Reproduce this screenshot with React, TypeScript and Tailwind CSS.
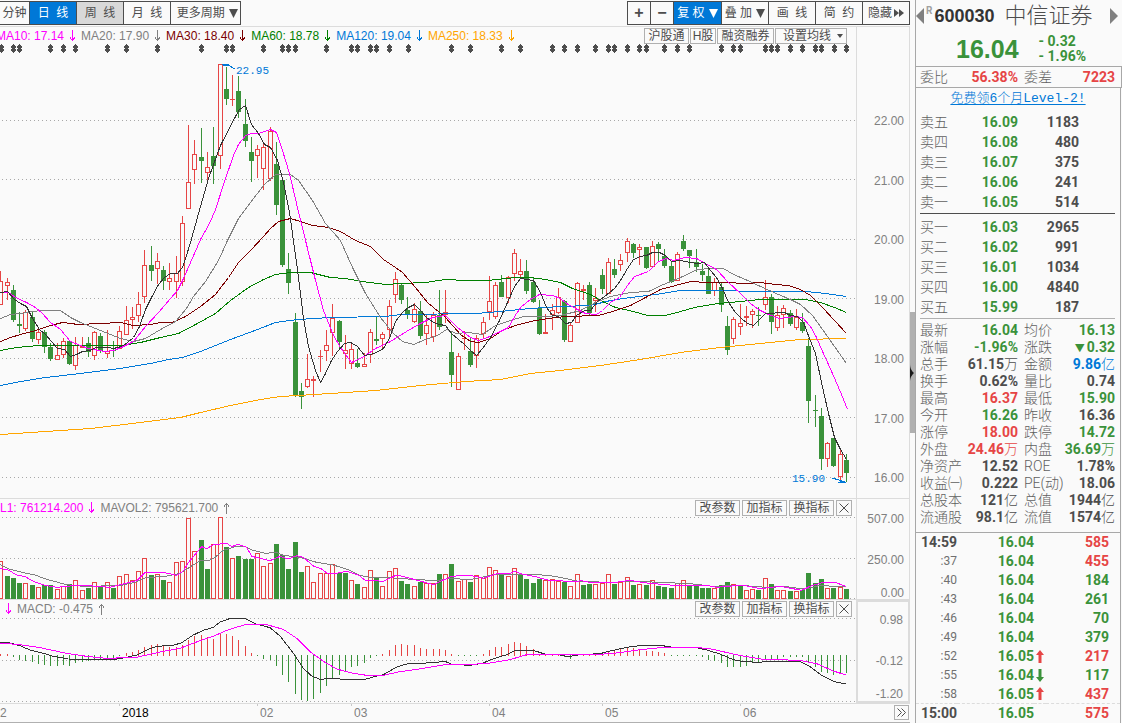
import React from 'react';
import clsx from 'clsx';

const RED = '#e64545';
const GREEN = '#3a923a';

// one entry per trading day: colour, high, body top, body bottom, low
const CANDLES = `r 271 281 305 305|r 278 282 286 300|g 285 290 320 322|g 312 324 326 333|r 310 312 329 331|g 312 317 339 342
r 328 332 340 344|g 330 332 347 353|g 343 347 359 361|r 343 355 360 360|r 338 341 355 358|g 341 341 364 365
r 337 345 366 370|r 337 346 348 348|g 337 343 352 357|r 331 332 356 360|g 333 336 351 353|r 330 351 354 358
g 341 350 351 357|r 326 331 349 349|r 306 320 335 335|r 307 317 320 329|r 292 304 316 322|r 250 265 297 303
g 246 265 271 281|r 253 261 269 284|g 266 270 281 290|r 263 278 282 290|r 256 273 282 298|r 216 223 282 286
r 125 182 209 209|r 140 154 170 184|g 128 157 161 183|r 152 167 173 182|g 127 156 166 184|r 64 64 156 169
g 67 89 99 105|r 75 99 100 106|g 76 91 112 118|g 99 124 141 147|g 137 152 161 182|r 145 149 156 178
r 143 147 169 190|r 127 131 179 181|g 142 164 205 215|g 177 180 265 267|g 253 269 283 294|g 313 322 395 397
g 383 391 397 409|r 354 379 387 388|r 376 379 381 397|r 350 356 357 372|r 330 345 351 361|r 304 318 333 356
g 320 321 342 348|r 335 350 354 369|r 343 349 364 369|g 349 363 367 368|r 353 364 367 367|r 329 332 355 363
g 317 339 341 345|r 332 334 339 349|r 300 306 330 337|r 272 279 295 303|g 283 285 300 304|g 297 310 315 319
r 303 309 322 323|g 301 311 336 339|r 315 325 334 345|r 312 315 337 342|g 290 315 327 330|r 290 312 315 323
g 332 352 375 387|r 353 356 390 390|r 331 338 339 350|g 338 351 365 367|r 335 338 356 368|r 317 322 334 339
r 276 301 312 320|r 282 285 317 319|g 275 282 297 297|r 276 277 298 303|r 249 253 274 281|r 259 271 275 278
g 260 271 291 294|g 278 282 302 303|g 300 308 334 335|r 314 332 334 334|r 304 310 315 330|r 288 297 313 314
g 300 301 340 342|r 322 325 342 342|r 282 283 323 323|r 285 289 291 300|g 282 285 313 315|r 288 298 301 312
g 269 275 289 294|r 258 262 294 294|g 259 269 275 278|r 254 260 265 271|r 238 241 253 262|g 243 244 253 258
r 244 247 250 265|g 247 247 268 269|r 241 246 267 267|g 242 244 249 261|g 249 256 266 268|g 262 266 282 283
r 252 254 281 281|g 235 241 249 251|g 250 250 256 268|g 249 262 267 272|g 264 271 275 281|g 269 276 294 294
r 278 282 291 296|g 282 287 305 312|g 316 326 350 355|r 317 319 339 344|r 304 323 327 335|r 306 316 318 326
r 309 311 315 328|g 307 315 316 326|r 280 297 305 310|g 294 297 322 334|r 306 315 328 331|r 305 308 315 328
g 310 313 324 326|r 309 317 328 330|g 313 322 331 333|g 338 346 401 423|g 395 410 411 427|g 408 416 459 470
r 442 443 459 467|g 438 438 466 467|r 450 454 477 480|g 454 460 473 482`
  .split(/[|\n]/)
  .map((row) => {
    const [color, ...v] = row.split(' ');
    const [high, top, bottom, low] = v.map(Number);
    return { color, high, top, bottom, low };
  });

const VOLUMES = `r214 g258 g264 g279 r280 g285 r291 g287 g287 r297 r290 g283 r271 r301 g294 r277 g290 r277 g294 r260 r253 r271 r244 r205
g255 r253 g270 r277 r217 r214 r85 r184 g150 g237 r163 r82 g171 r205 g198 g207 g207 r190 r229 r220 g162 g195 g237 g156 g246
r229 r277 r249 r249 r223 g250 g250 r271 g282 r292 r241 g264 r289 r244 r235 g273 g282 r289 g276 r280 r281 g252 r253 g222
r274 r269 g276 r256 r265 r232 r241 g250 r258 r235 g253 g267 g279 g267 r271 r268 r274 g276 r289 r253 g285 g282 r283 r280
r253 g282 r277 r262 g285 r283 g285 r271 g288 g291 g294 r280 r271 g285 g285 g294 g294 r295 g285 g276 r283 g287 r301 r298
g300 r265 g283 r301 r301 g303 r304 g300 g249 g279 g267 r295 g294 r292 g297`
  .split(/\s+/)
  .map((s) => ({ color: s[0], top: Number(s.slice(1)) }));

const MACD_ZERO = 495;
const MACD = `492 492 501 510 513 518 522 525 530 530 526 528 521 516 515 510 508 506 504 498 491 488 482 471 465 462 466 472 472 466
450 439 435 442 447 432 432 439 450 470 489 498 507 510 530 557 578 614 632 635 627 611 590 567 555 543 533 528 521 506
498 492 480 465 462 465 465 474 477 477 479 480 493 498 495 498 495 492 480 471 471 464 456 459 468 477 492 492 492 492
503 507 498 492 492 492 490 484 483 478 473 474 479 484 483 487 491 498 498 498 498 500 503 512 514 519 533 533 531 528
521 516 510 512 507 501 503 501 503 521 533 548 551 557 551 551`
  .split(/\s+/)
  .map(Number);

// the first visible day is half cut off by the left edge, hence i - 1
const dayX = (i: number) => 7 + Math.floor((i - 1) * 6.265);
const snap = (v: number) => Math.floor(v / 3) * 3;

const MA_LINES = [
  { stroke: '#ffa500', points: '0,434 45,431 90,428 140,422 180,417 200,412 230,405 260,399 280,396 297,395 330,393 375,390 420,385 465,381 500,379 530,373 560,370 600,365 640,359 680,352 720,347 760,343 800,339 846,338' },
  { stroke: '#0078d7', points: '0,385 15,382 45,377 80,373 120,368 150,363 168,359 182,357 200,351 230,339 257,329 275,322 297,319 330,317 385,316 400,314 475,313 500,311 530,308 560,306 590,305 610,300 630,297 655,294 680,290 725,290 750,291 805,291 825,293 846,296' },
  { stroke: '#008000', points: '0,350 10,348 25,346 40,345 120,345 140,342 160,337 178,333 195,324 215,313 230,300 248,287 263,279 275,274 290,272 310,272 330,277 345,278 362,281 385,284 400,283 425,282 445,279 465,280 487,280 515,277 530,277 545,279 560,282 572,288 590,294 602,301 615,307 633,311 647,315 665,315 680,311 694,307 718,303 740,301 760,299 805,299 820,302 834,307 846,312' },
  { stroke: '#7b0000', points: '0,341 10,337 20,334 35,330 50,325 62,322 78,324 120,322 133,325 150,324 160,322 172,322 185,316 200,306 215,294 228,277 238,262 250,250 263,236 270,228 278,221 290,218 300,221 312,225 328,227 340,231 355,240 370,246 383,259 395,267 402,272 415,287 427,302 445,317 460,334 470,341 478,342 490,338 502,330 515,325 530,321 547,318 565,316 598,315 612,311 630,305 645,297 660,289 675,285 690,281 706,282 725,282 745,283 760,282 775,284 788,285 800,289 810,295 822,307 834,320 846,333' },
  { stroke: '#808080', points: '0,318 10,314 20,313 40,310 60,310 70,317 80,322 90,326 100,330 120,338 133,341 145,338 160,329 175,321 186,308 193,296 205,281 218,260 227,240 238,218 250,202 263,185 275,174 290,174 298,180 312,200 325,223 340,240 352,267 365,293 380,317 393,333 402,341 413,344 425,339 437,335 446,329 456,333 468,332 482,334 495,325 510,320 523,316 545,316 560,315 580,310 595,302 610,296 630,292 648,291 663,284 680,277 697,269 710,268 723,268 733,274 745,279 760,286 778,294 790,299 800,304 812,315 822,329 834,346 846,363' },
  { stroke: '#ff00ff', points: '0,292 8,292 15,297 26,302 35,307 42,313 50,322 60,329 70,341 80,345 88,348 104,351 113,350 121,347 133,341 145,326 158,312 170,298 177,290 183,278 190,262 194,253 200,239 209,223 215,209 224,181 233,155 238,144 245,135 251,133 258,133 270,129 276,132 282,150 289,173 296,203 307,248 315,280 323,310 327,320 333,335 340,347 351,362 362,357 375,348 390,341 406,331 420,323 432,317 445,315 457,327 470,337 478,340 487,337 498,332 508,327 516,313 521,306 530,299 539,294 552,295 560,298 566,303 577,309 585,313 596,314 602,310 610,302 619,297 627,285 634,276 648,271 658,261 666,258 673,260 684,257 696,258 703,262 716,269 728,282 740,293 750,303 758,309 768,314 779,318 787,317 795,316 802,317 810,326 816,337 822,351 828,364 835,380 841,394 847,409' },
  { stroke: '#333333', points: '0,292 7,291 14,299 20,303 26,306 32,318 39,329 45,334 51,341 57,348 64,349 70,356 76,354 82,351 89,350 96,347 107,347 113,348 121,346 127,342 133,337 139,326 145,309 151,297 158,284 164,277 170,273 177,273 182,267 186,255 190,242 200,206 208,178 220,145 235,116 239,109 245,105 251,124 258,133 264,144 270,147 277,160 283,182 289,212 297,269 303,318 308,346 315,370 320,382 325,373 331,360 337,351 344,343 350,342 357,346 364,355 370,354 376,352 383,348 389,338 395,321 402,312 408,307 414,304 420,310 426,317 433,322 439,324 445,325 451,333 458,339 464,344 470,350 476,355 482,348 490,337 499,320 507,302 514,286 520,278 533,280 540,292 546,307 552,315 558,316 565,323 571,322 576,315 584,310 590,310 597,301 604,296 614,288 620,280 627,268 633,259 640,256 646,255 652,252 659,252 665,255 671,261 680,260 690,262 697,263 704,262 710,270 716,277 722,288 728,302 735,312 741,318 747,323 753,325 758,320 765,313 784,312 790,315 797,316 803,322 809,338 815,353 821,382 828,413 834,437 840,449 846,459' },
];

const EVENT_MARKS = [
  1, 13, 19, 50, 63, 75, 107, 126, 157, 201, 226, 232, 263, 282, 288, 295, 326, 351, 357, 370, 376, 389, 408, 451, 470, 501,
  520, 552, 564, 577, 595, 608, 614, 627, 639, 646, 664, 677, 689, 721, 733, 740, 765, 771, 777, 790, 802, 815, 821, 834, 846,
];

const Arrow = ({ up = false }: { up?: boolean }) => (
  <svg width="7" height="12" viewBox="0 0 7 12" className="mx-[5px] shrink-0" fill="none" stroke="currentColor" shapeRendering="crispEdges">
    <path d={up ? 'M3.5 12V1M1 4.5L3.5 1.5L6 4.5' : 'M3.5 0V11M1 7.5L3.5 10.5L6 7.5'} />
  </svg>
);

const Caret = () => (
  <svg width="9" height="9" viewBox="0 0 9 9" fill="currentColor" className="ml-px shrink-0">
    <path d="M0 0H9L4.5 9Z" />
  </svg>
);

const ToolButton = ({ className, children, ...rest }: React.ComponentProps<'button'>) => (
  <button
    className={clsx('flex h-6 items-center justify-center whitespace-pre border-y border-r border-[#4d4d4d]', className)}
    {...rest}
  >
    {children}
  </button>
);

const TagButton = ({ className, children, ...rest }: React.ComponentProps<'button'>) => (
  <button
    className={clsx('flex h-4 items-center justify-center border border-[#b0b0b0] bg-[#fafafa] leading-none text-[#4d4d4d]', className)}
    {...rest}
  >
    {children}
  </button>
);

const IndicatorButtons = () => (
  <div className="flex gap-0.5">
    <TagButton className="w-[45px]">改参数</TagButton>
    <TagButton className="w-[45px]">加指标</TagButton>
    <TagButton className="w-[45px]">换指标</TagButton>
    <TagButton className="w-4" aria-label="关闭">
      <svg width="10" height="10" viewBox="0 0 10 10" stroke="#4d4d4d">
        <path d="M0.5 0.5L9.5 9.5M9.5 0.5L0.5 9.5" />
      </svg>
    </TagButton>
  </div>
);

const GridLines = ({ ys, width, unit = 1 }: { ys: number[]; width: number; unit?: number }) => (
  <g stroke="#a8a8a8" strokeWidth={unit} strokeDasharray={`${unit} ${unit * 3}`}>
    {ys.map((y) => (
      <line key={y} x1={unit * 2} x2={width} y1={y + unit / 2} y2={y + unit / 2} />
    ))}
  </g>
);

const PriceChart = () => (
  <svg className="block h-[454px] w-full" viewBox="0 44 856 454" preserveAspectRatio="none" shapeRendering="crispEdges">
    {EVENT_MARKS.map((x) => (
      <path key={x} fill="#4d4d4d" d={`M${x} 44h1v1h1v1h1v2h-1v1h1v2h-1v1h-1v1h-1v-1h-1v-1h-1v-2h1v-1h-1v-2h1v-1h1z`} />
    ))}
    <GridLines ys={[120, 179, 239, 298, 358, 417, 477]} width={856} />
    {CANDLES.map(({ color, high, top, bottom, low }, i) => {
      const x = dayX(i);
      if (color === 'g') {
        return (
          <g key={i} fill={GREEN}>
            <rect x={x} y={high} width={1} height={low - high} />
            <rect x={x - 2} y={top} width={5} height={Math.max(bottom - top, 1)} />
          </g>
        );
      }
      return (
        <g key={i} fill={RED}>
          <rect x={x} y={high} width={1} height={Math.max(top - high, 0)} />
          <rect x={x} y={bottom} width={1} height={Math.max(low - bottom, 0)} />
          {bottom - top < 3 ? (
            <rect x={x - 2} y={top} width={5} height={bottom - top} />
          ) : (
            <rect x={x - 1.5} y={top + 0.5} width={4} height={bottom - top - 1} fill="#fafafa" stroke={RED} />
          )}
        </g>
      );
    })}
    <g fill="none" transform="translate(0.5 0.5)">
      {MA_LINES.map((l) => (
        <polyline key={l.stroke} stroke={l.stroke} points={l.points} />
      ))}
    </g>
    <g fill="#0078d7" stroke="#0078d7">
      <path d="M222 64.5H229M223 65.5H229L235 69" fill="none" />
      <path d="M225 64h3v3z" stroke="none" />
      <path d="M832 478L839 480L846 482.5H838" fill="none" />
      <path d="M841 480l3 3h-4z" stroke="none" />
    </g>
    <g fill="#0078d7" fontFamily='"Liberation Mono", monospace' fontSize="11">
      <text x="236" y="74">22.95</text>
      <text x="792" y="482">15.90</text>
    </g>
  </svg>
);

// volume and MACD canvases use three units per pixel
const VolumeChart = () => (
  <svg className="block h-[82px] w-full" viewBox="0 81 2568 246" preserveAspectRatio="none" shapeRendering="crispEdges">
    <GridLines ys={[81, 204, 324]} width={2568} unit={3} />
    {VOLUMES.map(({ color, top }, i) => {
      const x = dayX(i) * 3;
      const y = snap(top);
      return color === 'g' ? (
        <rect key={i} x={x - 6} y={y} width={15} height={327 - y} fill={GREEN} />
      ) : (
        <rect key={i} x={x - 4.5} y={y + 1.5} width={12} height={324 - y} fill="#fafafa" stroke={RED} strokeWidth={3} />
      );
    })}
    <g fill="none" strokeWidth={3}>
      <g stroke="#808080">
        <path d="M0 223L30 238L80 250L105 255L140 268L200 284L250 289L360 287L405 277L440 262L490 260L540 250L575 228L600 212L625 213L645 202L670 181L710 169L735 170L755 180L795 190L830 187L850 196L900 202L950 217L1000 225L1050 241L1080 256L1110 262L1180 264L1240 268L1310 272L1350 265L1380 267" />
        <path transform="translate(1320 0)" d="M60 267L100 267L170 252L230 254L280 253L330 257L370 264L410 273L500 277L600 274L670 278L740 280L820 289L900 286L980 292L1040 290L1080 296L1110 294L1140 286L1180 289L1217 290" />
      </g>
      <g stroke="#ff00ff">
        <path d="M0 235L25 240L50 255L75 260L105 276L135 286L170 292L230 286L280 288L330 292L370 282L410 272L435 247L490 247L530 256L550 243L565 218L605 170L620 176L640 164L680 160L695 170L715 163L740 172L755 199L810 212L840 199L865 207L890 197L910 202L940 228L965 237L980 249L1010 250L1040 244L1075 255L1095 270L1150 274L1190 255L1230 265L1300 284L1350 261L1380 256" />
        <path transform="translate(1320 0)" d="M60 256L100 258L130 265L175 250L210 250L225 244L245 252L290 261L330 272L370 273L390 276L425 272L460 279L520 278L570 271L620 279L700 286L800 286L830 292L860 289L910 286L960 296L1020 289L1085 301L1110 289L1150 277L1185 277L1217 289" />
      </g>
    </g>
  </svg>
);

const MacdChart = () => (
  <svg className="block h-[85px] w-full" viewBox="0 384 2568 255" preserveAspectRatio="none" shapeRendering="crispEdges">
    <GridLines ys={[384, 510, 633]} width={2568} unit={3} />
    {MACD.map((v, i) => {
      const up = v < MACD_ZERO;
      return (
        <rect
          key={i}
          x={dayX(i) * 3}
          y={up ? snap(v) : MACD_ZERO}
          width={3}
          height={up ? MACD_ZERO + 3 - snap(v) : Math.max(snap(v) - MACD_ZERO, 3)}
          fill={up ? RED : GREEN}
        />
      );
    })}
    <g fill="none" strokeWidth={3}>
      <g stroke="#333333">
        <path d="M0 458L30 459L60 467L90 480L130 490L160 499L205 507L240 509L340 509L380 502L410 495L440 480L470 469L520 466L545 458L580 435L610 421L640 412L660 396L690 385.5L735 386L765 401L810 413L840 438L865 470L885 497L910 535L935 558L960 568L1000 565L1030 568L1095 568L1130 558L1150 554L1190 531L1220 522L1300 518L1335 514L1355 523" />
        <path transform="translate(1320 0)" d="M35 523L90 526L130 519L155 508L200 494L225 482L280 481L320 494L360 495L385 500L420 494L480 491L515 482L560 472L600 467L660 466L700 472L770 473L800 480L840 492L880 509L905 514L950 517L1000 514L1080 514L1110 530L1145 556L1180 574L1217 582" />
      </g>
      <g stroke="#ff00ff">
        <path d="M0 459L60 464L120 473L200 490L260 499L320 505L410 502L440 495L490 484L540 475L600 452L640 439L680 421L735 404L800 404L850 418L890 445L930 485L970 514L1010 537L1060 550L1100 556L1150 556L1200 545L1270 535L1340 523L1380 523" />
        <path transform="translate(1320 0)" d="M60 523L100 523L150 519L210 509L260 494L380 494L480 493L540 488L600 479L670 472L770 472L820 478L870 490L920 500L970 508L1080 511L1130 521L1180 543L1217 555" />
      </g>
    </g>
  </svg>
);

const MONTHS = [
  { label: '2', cls: 'flex-[119]' },
  { label: '2018', cls: 'flex-[138] text-black' },
  { label: '02', cls: 'flex-[94]' },
  { label: '03', cls: 'flex-[138]' },
  { label: '04', cls: 'flex-[113]' },
  { label: '05', cls: 'flex-[138]' },
  { label: '06', cls: 'flex-[154]' },
];

const LEGEND = [
  { text: 'MA10: 17.14', cls: 'text-[#ff00ff]' },
  { text: 'MA20: 17.90', cls: 'text-[#808080]' },
  { text: 'MA30: 18.40', cls: 'text-[#7b0000]' },
  { text: 'MA60: 18.78', cls: 'text-[#008000]' },
  { text: 'MA120: 19.04', cls: 'text-[#0078d7]' },
  { text: 'MA250: 18.33', cls: 'text-[#ffa500]' },
];

const TONE: Record<string, string> = {
  g: 'text-[#3a923a]',
  r: 'text-[#e64545]',
  b: 'text-[#0078d7]',
  k: 'text-[#4d4d4d]',
};

const SELLS = [['卖五', '16.09', '1183'], ['卖四', '16.08', '480'], ['卖三', '16.07', '375'], ['卖二', '16.06', '241'], ['卖一', '16.05', '514']];
const BUYS = [['买一', '16.03', '2965'], ['买二', '16.02', '991'], ['买三', '16.01', '1034'], ['买四', '16.00', '4840'], ['买五', '15.99', '187']];

// label, tone, value, label, tone, value
const DETAILS = [
  ['最新', 'g', '16.04', '均价', 'g', '16.13'],
  ['涨幅', 'g', '-1.96%', '涨跌', 'g', '▼0.32'],
  ['总手', 'k', '61.15万', '金额', 'b', '9.86亿'],
  ['换手', 'k', '0.62%', '量比', 'k', '0.74'],
  ['最高', 'r', '16.37', '最低', 'g', '15.90'],
  ['今开', 'g', '16.26', '昨收', 'k', '16.36'],
  ['涨停', 'r', '18.00', '跌停', 'g', '14.72'],
  ['外盘', 'r', '24.46万', '内盘', 'g', '36.69万'],
  ['净资产', 'k', '12.52', 'ROE', 'k', '1.78%'],
  ['收益㈠', 'k', '0.222', 'PE(动)', 'k', '18.06'],
  ['总股本', 'k', '121亿', '总值', 'k', '1944亿'],
  ['流通股', 'k', '98.1亿', '流值', 'k', '1574亿'],
];

const TICKS = [
  ['14:59', '16.04', '', 'r', '585'],
  [':37', '16.04', '', 'r', '455'],
  [':40', '16.04', '', 'g', '184'],
  [':43', '16.04', '', 'g', '261'],
  [':46', '16.04', '', 'g', '70'],
  [':49', '16.04', '', 'g', '379'],
  [':52', '16.05', 'up', 'r', '217'],
  [':55', '16.04', 'down', 'g', '117'],
  [':58', '16.05', 'up', 'r', '437'],
  ['15:00', '16.05', '', 'r', '575'],
];

const LABEL = 'p-0 text-left font-light whitespace-nowrap text-[#606060]';

const Value = ({ text }: { text: string }) => {
  const unit = /[万亿]$/.test(text) ? text.slice(-1) : '';
  const down = text.startsWith('▼');
  const num = text.replace(/[▼万亿]/g, '');
  return (
    <>
      {down && <span className="mr-0.5 text-[10px]">▼</span>}
      {num}
      {unit && <span className="font-light">{unit}</span>}
    </>
  );
};

const BookTable = ({ rows }: { rows: string[][] }) => (
  <table className="w-full table-fixed border-collapse">
    <colgroup>
      <col className="w-[42px]" />
      <col className="w-14" />
      <col className="w-[61px]" />
      <col />
    </colgroup>
    <tbody>
      {rows.map(([label, price, vol]) => (
        <tr key={label} className="h-5">
          <th scope="row" className={LABEL}>{label}</th>
          <td className="p-0 text-right font-bold text-[#3a923a]">{price}</td>
          <td className="p-0 text-right font-bold text-[#4d4d4d]">{vol}</td>
          <td className="p-0" />
        </tr>
      ))}
    </tbody>
  </table>
);

const TickArrow = ({ dir }: { dir: string }) => (
  <svg width="8" height="13" viewBox="0 0 8 13" fill="currentColor" className={dir === 'up' ? TONE.r : TONE.g}>
    <path d={dir === 'up' ? 'M4 0L8 5H5.5V13H2.5V5H0Z' : 'M4 13L8 8H5.5V0H2.5V8H0Z'} />
  </svg>
);

const AXIS = 'flex w-[54px] shrink-0 flex-col pr-[5px] text-right leading-3 text-[#808080]';

export default function App() {
  return (
    <div className="flex min-h-screen w-full overflow-hidden bg-[#fafafa] font-['Liberation_Sans','Noto_Sans_CJK_SC',sans-serif] text-xs text-[#4d4d4d]">
      <main className="flex min-w-0 flex-1 flex-col border-b border-[#b0b0b0]">
        <header className="flex h-[27px] items-start justify-between border-b border-[#dcdcdc] pt-px leading-none">
          <nav className="flex">
            <ToolButton className="w-[30px]">分钟</ToolButton>
            <ToolButton className="w-[47px] bg-[#0078d7] text-white">日  线</ToolButton>
            <ToolButton className="w-[47px] bg-[#d8d8d8]">周  线</ToolButton>
            <ToolButton className="w-[47px]">月  线</ToolButton>
            <ToolButton className="w-[70px] pl-1" aria-haspopup="menu">更多周期 <Caret /></ToolButton>
          </nav>
          <div className="flex">
            <ToolButton className="w-6 border-l text-base font-bold" aria-label="放大">+</ToolButton>
            <ToolButton className="w-[23px] text-base font-bold" aria-label="缩小">−</ToolButton>
            <ToolButton className="w-12 bg-[#0078d7] text-white" aria-haspopup="menu">复 权 <Caret /></ToolButton>
            <ToolButton className="w-[47px]" aria-haspopup="menu">叠 加 <Caret /></ToolButton>
            <ToolButton className="w-[47px]">画  线</ToolButton>
            <ToolButton className="w-[47px]">简  约</ToolButton>
            <ToolButton className="w-[47px]">
              隐藏
              <svg width="10" height="8" viewBox="0 0 10 8" fill="currentColor" className="ml-0.5">
                <path d="M0 0L5 4L0 8ZM5 0L10 4L5 8Z" />
              </svg>
            </ToolButton>
          </div>
        </header>

        {/* Price panel */}
        <section className="flex border-b border-[#dcdcdc]">
          <div className="min-w-0 flex-1">
            <div className="flex h-[17px] items-start justify-between pt-px pr-[9px]">
              <div className="-ml-1 flex whitespace-nowrap">
                {LEGEND.map((l) => (
                  <span key={l.text} className={clsx('flex items-center', l.cls)}>
                    {l.text}
                    <Arrow />
                  </span>
                ))}
              </div>
              <div className="flex gap-px">
                <TagButton className="w-[45px]">沪股通</TagButton>
                <TagButton className="w-[26px]">H股</TagButton>
                <TagButton className="w-[57px]">融资融券</TagButton>
                <TagButton className="w-[72px] gap-1.5 pl-1" aria-haspopup="menu">
                  设置均线
                  <svg width="6" height="4" viewBox="0 0 6 4" fill="currentColor">
                    <path d="M0 0H6L3 4Z" />
                  </svg>
                </TagButton>
              </div>
            </div>
            <PriceChart />
          </div>
          <div className={clsx(AXIS, 'justify-between border-x border-[#dcdcdc] pt-[88px] pb-3.5')}>
            {['22.00', '21.00', '20.00', '19.00', '18.00', '17.00', '16.00'].map((p) => (
              <span key={p}>{p}</span>
            ))}
          </div>
        </section>

        {/* Volume panel */}
        <section className="flex border-b border-[#dcdcdc]">
          <div className="min-w-0 flex-1">
            <div className="flex h-[18px] items-start justify-between pt-px pr-1">
              <div className="flex whitespace-nowrap">
                <span className="flex items-center text-[#ff00ff]">L1: 761214.200<Arrow /></span>
                <span className="flex items-center text-[#808080]">MAVOL2: 795621.700<Arrow up /></span>
              </div>
              <IndicatorButtons />
            </div>
            <VolumeChart />
          </div>
          <div className={clsx(AXIS, 'border-x border-[#dcdcdc] pt-3.5')}>
            <span className="mb-[29px]">507.00</span>
            <span className="mb-[21px]">250.00</span>
            <span>0.00</span>
          </div>
        </section>

        {/* MACD panel */}
        <section className="flex border-b border-[#dcdcdc]">
          <div className="min-w-0 flex-1">
            <div className="flex h-[18px] items-start justify-between pt-px pr-1">
              <div className="flex whitespace-nowrap">
                <span className="flex items-center text-[#ff00ff]"><Arrow /></span>
                <span className="flex items-center text-[#808080]">MACD: -0.475<Arrow up /></span>
              </div>
              <IndicatorButtons />
            </div>
            <MacdChart />
          </div>
          <div className={clsx(AXIS, 'border-2 border-[#dcdcdc] pt-3')}>
            <span className="mb-[29px]">0.98</span>
            <span className="mb-[21px]">-0.12</span>
            <span>-1.20</span>
          </div>
        </section>

        <footer className="flex h-[18px] leading-[18px] text-[#808080]">
          {MONTHS.map((m, i) => (
            <div key={m.label} className={clsx('flex', m.cls)}>
              {i > 0 && <span className="mr-0.5 h-0.5 w-px bg-[#c8c8c8]" />}
              {m.label}
            </div>
          ))}
          <button className="mt-px mr-px flex h-[15px] w-[15px] items-center justify-center border border-[#b0b0b0]" aria-label="更多">
            <svg width="9" height="9" viewBox="0 0 9 9" fill="none" stroke="#4d4d4d">
              <path d="M0.5 0.5L4.5 4.5L0.5 8.5M4.5 0.5L8.5 4.5L4.5 8.5" />
            </svg>
          </button>
        </footer>
      </main>

      <div className="w-[5px] shrink-0 pt-[312px]">
        <div className="flex h-[121px] items-center bg-[#b0b0b0]">
          <svg width="4" height="20" viewBox="0 0 4 20" fill="#1a1a1a">
            <path d="M0 0C0 5 1 7 4 10C1 13 0 15 0 20Z" />
          </svg>
        </div>
      </div>

      {/* Quote panel */}
      <aside className="w-[207px] shrink-0 border-l border-[#a8a8a8] font-['Roboto','Noto_Sans_CJK_SC',sans-serif] text-sm leading-none">
        <div className="flex h-8 items-center pr-1">
          <button aria-label="上一只">
            <svg width="8" height="16" viewBox="0 0 8 16" fill="#808080"><path d="M8 0V16L0 8Z" /></svg>
          </button>
          <sup className="mx-0.5 text-[10px] font-bold text-[#a0a0a0]">R</sup>
          <strong className="font-['Liberation_Sans',sans-serif] text-lg leading-none text-[#333]">600030</strong>
          <h1 className="ml-2.5 flex-1 whitespace-nowrap text-[22px] leading-none font-light">中信证券</h1>
          <button aria-label="下一只">
            <svg width="8" height="16" viewBox="0 0 8 16" fill="#808080"><path d="M0 0V16L8 8Z" /></svg>
          </button>
        </div>
        <div className="flex h-[34px] items-center pl-10 font-bold text-[#3a923a]">
          <span className="font-['Liberation_Sans',sans-serif] text-[25px]">16.04</span>
          <div className="ml-5 leading-[15px]">
            <div>- 0.32</div>
            <div>- 1.96%</div>
          </div>
        </div>
        <div className="flex h-[22px] items-center border-y border-r border-[#a8a8a8] pr-1.5 pl-1 font-bold text-[#e64545]">
          <span className="font-light text-[#606060]">委比</span>
          <span className="w-[70px] text-right">56.38%</span>
          <span className="ml-1.5 font-light text-[#606060]">委差</span>
          <span className="flex-1 text-right">7223</span>
        </div>

        <div className="mr-px border-r border-[#a8a8a8]">
          <div className="flex h-6 items-center justify-center pb-1">
            <a href="#level2" className="font-['Liberation_Mono','Noto_Sans_CJK_SC',monospace] text-[13px] font-light text-[#0078d7] underline underline-offset-2">
              免费领6个月Level-2!
            </a>
          </div>
          <div className="pr-[5px] pl-1">
            <BookTable rows={SELLS} />
            <hr className="mt-px mb-[3px] border-[#4d4d4d]" />
            <BookTable rows={BUYS} />
            <hr className="mt-px mb-0.5 border-[#b0b0b0]" />
            <table className="w-full table-fixed border-collapse">
              <colgroup>
                <col className="w-[42px]" />
                <col className="w-14" />
                <col className="w-[42px]" />
                <col />
              </colgroup>
              <tbody>
                {DETAILS.map(([l1, t1, v1, l2, t2, v2]) => (
                  <tr key={l1} className="h-[17px]">
                    <th scope="row" className={LABEL}>{l1}</th>
                    <td className={clsx('p-0 text-right font-bold whitespace-nowrap', TONE[t1])}><Value text={v1} /></td>
                    <th scope="row" className={clsx(LABEL, 'pl-1.5')}>{l2}</th>
                    <td className={clsx('p-0 text-right font-bold whitespace-nowrap', TONE[t2])}><Value text={v2} /></td>
                  </tr>
                ))}
              </tbody>
            </table>
          </div>
          <table className="mt-[7px] w-full table-fixed border-collapse border-t border-[#a8a8a8]">
            <colgroup>
              <col className="w-[41px]" />
              <col className="w-[77px]" />
              <col className="w-3" />
              <col />
            </colgroup>
            <tbody>
              {TICKS.map(([time, price, dir, tone, vol]) => (
                <tr key={time} className={clsx('h-[19px]', time === '15:00' && 'border-t border-dashed border-[#dcdcdc]')}>
                  <td className={clsx('p-0 text-right', time.startsWith(':') ? 'text-xs text-[#707070]' : 'font-bold')}>{time}</td>
                  <td className="p-0 text-right font-bold text-[#3a923a]">{price}</td>
                  <td className="p-0 pl-0.5">{dir && <TickArrow dir={dir} />}</td>
                  <td className={clsx('p-0 pr-[11px] text-right font-bold', TONE[tone])}>{vol}</td>
                </tr>
              ))}
            </tbody>
          </table>
        </div>
      </aside>
    </div>
  );
}
